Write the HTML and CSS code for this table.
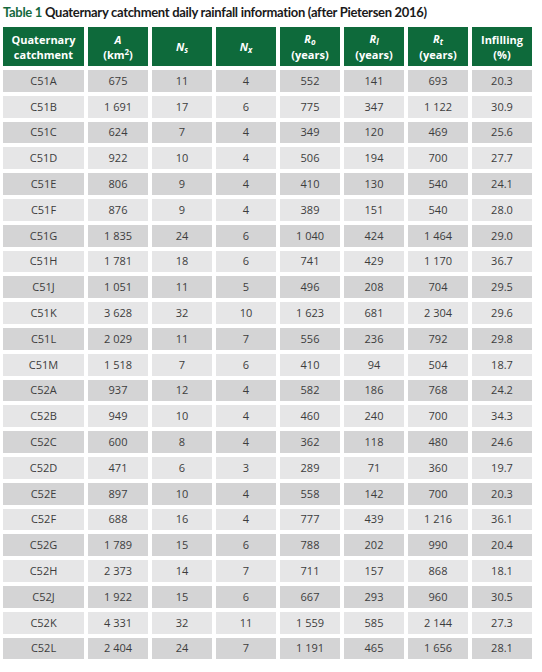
FILE: index.html
```html
<!DOCTYPE html>
<html>
<head>
<meta charset="utf-8">
<link rel="stylesheet" href="styles.css">
</head>
<body>
<h1 class="title"><span class="tnum">Table 1</span> Quaternary catchment daily rainfall information (after Pietersen 2016)</h1>
<table class="data">
<thead>
<tr>
<th class="c1">Quaternary<br>catchment</th>
<th><i>A</i><br>(km<sup>2</sup>)</th>
<th><i>N<sub>s</sub></i></th>
<th><i>N<sub>x</sub></i></th>
<th><span class="l1"><i>R<sub>o</sub></i></span><span class="l2">(years)</span></th>
<th><span class="l1"><i>R<sub>l</sub></i></span><span class="l2">(years)</span></th>
<th><span class="l1"><i>R<sub>t</sub></i></span><span class="l2">(years)</span></th>
<th>Infilling<br>(%)</th>
</tr>
</thead>
<tbody>
<tr><td>C51A</td><td>675</td><td>11</td><td>4</td><td>552</td><td>141</td><td>693</td><td>20.3</td></tr>
<tr><td>C51B</td><td>1 691</td><td>17</td><td>6</td><td>775</td><td>347</td><td>1 122</td><td>30.9</td></tr>
<tr><td>C51C</td><td>624</td><td>7</td><td>4</td><td>349</td><td>120</td><td>469</td><td>25.6</td></tr>
<tr><td>C51D</td><td>922</td><td>10</td><td>4</td><td>506</td><td>194</td><td>700</td><td>27.7</td></tr>
<tr><td>C51E</td><td>806</td><td>9</td><td>4</td><td>410</td><td>130</td><td>540</td><td>24.1</td></tr>
<tr><td>C51F</td><td>876</td><td>9</td><td>4</td><td>389</td><td>151</td><td>540</td><td>28.0</td></tr>
<tr><td>C51G</td><td>1 835</td><td>24</td><td>6</td><td>1 040</td><td>424</td><td>1 464</td><td>29.0</td></tr>
<tr><td>C51H</td><td>1 781</td><td>18</td><td>6</td><td>741</td><td>429</td><td>1 170</td><td>36.7</td></tr>
<tr><td>C51J</td><td>1 051</td><td>11</td><td>5</td><td>496</td><td>208</td><td>704</td><td>29.5</td></tr>
<tr><td>C51K</td><td>3 628</td><td>32</td><td>10</td><td>1 623</td><td>681</td><td>2 304</td><td>29.6</td></tr>
<tr><td>C51L</td><td>2 029</td><td>11</td><td>7</td><td>556</td><td>236</td><td>792</td><td>29.8</td></tr>
<tr><td>C51M</td><td>1 518</td><td>7</td><td>6</td><td>410</td><td>94</td><td>504</td><td>18.7</td></tr>
<tr><td>C52A</td><td>937</td><td>12</td><td>4</td><td>582</td><td>186</td><td>768</td><td>24.2</td></tr>
<tr><td>C52B</td><td>949</td><td>10</td><td>4</td><td>460</td><td>240</td><td>700</td><td>34.3</td></tr>
<tr><td>C52C</td><td>600</td><td>8</td><td>4</td><td>362</td><td>118</td><td>480</td><td>24.6</td></tr>
<tr><td>C52D</td><td>471</td><td>6</td><td>3</td><td>289</td><td>71</td><td>360</td><td>19.7</td></tr>
<tr><td>C52E</td><td>897</td><td>10</td><td>4</td><td>558</td><td>142</td><td>700</td><td>20.3</td></tr>
<tr><td>C52F</td><td>688</td><td>16</td><td>4</td><td>777</td><td>439</td><td>1 216</td><td>36.1</td></tr>
<tr><td>C52G</td><td>1 789</td><td>15</td><td>6</td><td>788</td><td>202</td><td>990</td><td>20.4</td></tr>
<tr><td>C52H</td><td>2 373</td><td>14</td><td>7</td><td>711</td><td>157</td><td>868</td><td>18.1</td></tr>
<tr><td>C52J</td><td>1 922</td><td>15</td><td>6</td><td>667</td><td>293</td><td>960</td><td>30.5</td></tr>
<tr><td>C52K</td><td>4 331</td><td>32</td><td>11</td><td>1 559</td><td>585</td><td>2 144</td><td>27.3</td></tr>
<tr><td>C52L</td><td>2 404</td><td>24</td><td>7</td><td>1 191</td><td>465</td><td>1 656</td><td>28.1</td></tr>
</tbody>
</table>
</body>
</html>
```
FILE: styles.css
```css
html, body {
  margin: 0;
  padding: 0;
  background: #ffffff;
}
body {
  font-family: "Open Sans", "Noto Sans", sans-serif;
}
.title {
  margin: 0;
  padding: 4px 0 0 3px;
  height: 23px;
  box-sizing: border-box;
  font-family: "Lato", sans-serif;
  font-size: 13px;
  font-weight: bold;
  line-height: 16px;
  letter-spacing: -0.3px;
  color: #1a1a1a;
  white-space: nowrap;
}
.tnum {
  color: #14693d;
}
.data {
  border-collapse: separate;
  border-spacing: 4px 4.15px;
  margin-left: -1px;
  table-layout: fixed;
}
.data th {
  background: #0e6a3b;
  color: #ffffff;
  width: 60px;
  height: 39px;
  padding: 0;
  font-size: 11px;
  font-weight: bold;
  line-height: 15px;
  text-align: center;
  vertical-align: middle;
}
.data th.c1 {
  width: 81px;
}
.data th .l1,
.data th .l2 {
  display: block;
}
.data th .l1 {
  height: 15px;
  line-height: 13px;
}
.data th sub {
  font-size: 8px;
  line-height: 0;
  vertical-align: -2px;
}
.data th sup {
  font-size: 8px;
  line-height: 0;
  vertical-align: 4px;
}
.data td {
  height: 21.8px;
  padding: 0;
  font-size: 11px;
  color: #3d3d3d;
  text-align: center;
  vertical-align: middle;
  line-height: 14px;
}
.data tbody tr:nth-child(odd) td {
  background: #d4d4d5;
}
.data tbody tr:nth-child(even) td {
  background: #e6e6e7;
}
```
